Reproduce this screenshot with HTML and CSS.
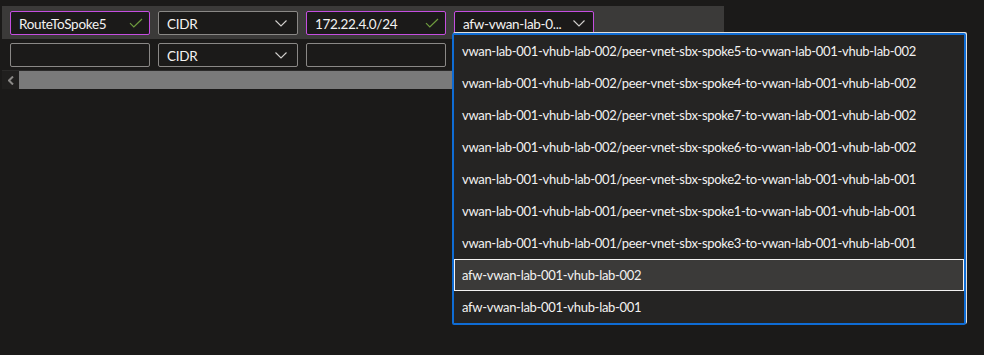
FILE: index.html
```html
<!DOCTYPE html>
<html lang="en">
<head>
  <meta charset="UTF-8" />
  <title>Route table</title>
  <link rel="stylesheet" href="styles.css">
</head>
<body>
  <div class="routes">
    <div class="route_row active">
      <div class="field valid">
        <span class="value">RouteToSpoke5</span>
        <svg class="check" width="14" height="10" viewBox="0 0 14 10"><path d="M1 5.2 L4.8 9 L13 1" fill="none" stroke="#6f9c3e" stroke-width="1.2"/></svg>
      </div>
      <div class="field select">
        <span class="value">CIDR</span>
        <svg class="chevron" width="12" height="7" viewBox="0 0 12 7"><path d="M0.5 0.5 L6 6 L11.5 0.5" fill="none" stroke="#d2d0ce" stroke-width="1.1"/></svg>
      </div>
      <div class="field valid">
        <span class="value">172.22.4.0/24</span>
        <svg class="check" width="14" height="10" viewBox="0 0 14 10"><path d="M1 5.2 L4.8 9 L13 1" fill="none" stroke="#6f9c3e" stroke-width="1.2"/></svg>
      </div>
      <div class="field select open">
        <span class="value">afw-vwan-lab-0...</span>
        <svg class="chevron" width="12" height="7" viewBox="0 0 12 7"><path d="M0.5 0.5 L6 6 L11.5 0.5" fill="none" stroke="#d2d0ce" stroke-width="1.1"/></svg>
      </div>
    </div>
    <div class="route_row">
      <div class="field"></div>
      <div class="field select">
        <span class="value">CIDR</span>
        <svg class="chevron" width="12" height="7" viewBox="0 0 12 7"><path d="M0.5 0.5 L6 6 L11.5 0.5" fill="none" stroke="#d2d0ce" stroke-width="1.1"/></svg>
      </div>
      <div class="field"></div>
      <div class="field select"></div>
    </div>
    <div class="hscroll">
      <span class="scroll_btn">
        <svg width="6" height="9" viewBox="0 0 6 9"><path d="M5 0.5 L1 4.5 L5 8.5" fill="none" stroke="#8a8886" stroke-width="2"/></svg>
      </span>
      <div class="thumb"></div>
    </div>
  </div>

  <!-- lista aberta do último campo -->
  <ul class="dropdown">
    <li>vwan-lab-001-vhub-lab-002/peer-vnet-sbx-spoke5-to-vwan-lab-001-vhub-lab-002</li>
    <li>vwan-lab-001-vhub-lab-002/peer-vnet-sbx-spoke4-to-vwan-lab-001-vhub-lab-002</li>
    <li>vwan-lab-001-vhub-lab-002/peer-vnet-sbx-spoke7-to-vwan-lab-001-vhub-lab-002</li>
    <li>vwan-lab-001-vhub-lab-002/peer-vnet-sbx-spoke6-to-vwan-lab-001-vhub-lab-002</li>
    <li>vwan-lab-001-vhub-lab-001/peer-vnet-sbx-spoke2-to-vwan-lab-001-vhub-lab-001</li>
    <li>vwan-lab-001-vhub-lab-001/peer-vnet-sbx-spoke1-to-vwan-lab-001-vhub-lab-001</li>
    <li>vwan-lab-001-vhub-lab-001/peer-vnet-sbx-spoke3-to-vwan-lab-001-vhub-lab-001</li>
    <li class="selected">afw-vwan-lab-001-vhub-lab-002</li>
    <li>afw-vwan-lab-001-vhub-lab-001</li>
  </ul>
</body>
</html>
```

FILE: styles.css
```css
body {
  margin: 0;
  background: #1b1a19;
  color: #f3f2f1;
  font-family: Lato, "Noto Sans", sans-serif;
  font-size: 13px;
  letter-spacing: -0.3px;
  min-height: 100vh;
}

.routes {
  width: 722px;
  margin: 6px 0 0 2px;
}

.route_row {
  display: flex;
  gap: 8px;
  padding: 4px 0 3px 8px;
}

.route_row.active {
  background: #3b3a39;
  padding: 5px 0 4px 8px;
}

.field {
  width: 140px;
  height: 24px;
  box-sizing: border-box;
  border: 1px solid #8a8886;
  border-radius: 2px;
  background: #1b1a19;
  display: flex;
  align-items: center;
  justify-content: space-between;
  padding: 0 6px 0 8px;
  font-size: 13.5px;
}

.field.valid,
.field.open {
  border-color: #c44ee0;
}

.field .value {
  white-space: nowrap;
  line-height: 20px;
  padding-top: 1px;
}

.field.select .chevron {
  margin-right: 4px;
}

.field.open .chevron {
  margin-right: 2px;
}

.hscroll {
  height: 18px;
  display: flex;
  background: #7a7a7a;
  border-top: 1px solid #2b2a29;
}

.scroll_btn {
  width: 17px;
  background: #201f1e;
  display: flex;
  align-items: center;
  justify-content: center;
}

.thumb {
  flex: 1;
}

.dropdown {
  position: absolute;
  top: 33px;
  left: 452px;
  width: 510px;
  margin: 0;
  padding: 0;
  list-style: none;
  background: #252423;
  border: 2px solid #0f6cd4;
  border-radius: 2px;
  box-shadow: 1px -1px 0 #e1dfdd;
  overflow: hidden;
}

.dropdown li {
  height: 32px;
  line-height: 31px;
  padding: 1px 8px 0;
  box-sizing: border-box;
  white-space: nowrap;
  color: #f3f2f1;
}

.dropdown li.selected {
  background: #3b3a39;
  border: 1px solid #f3f2f1;
  padding: 0 7px;
  line-height: 30px;
}
```
